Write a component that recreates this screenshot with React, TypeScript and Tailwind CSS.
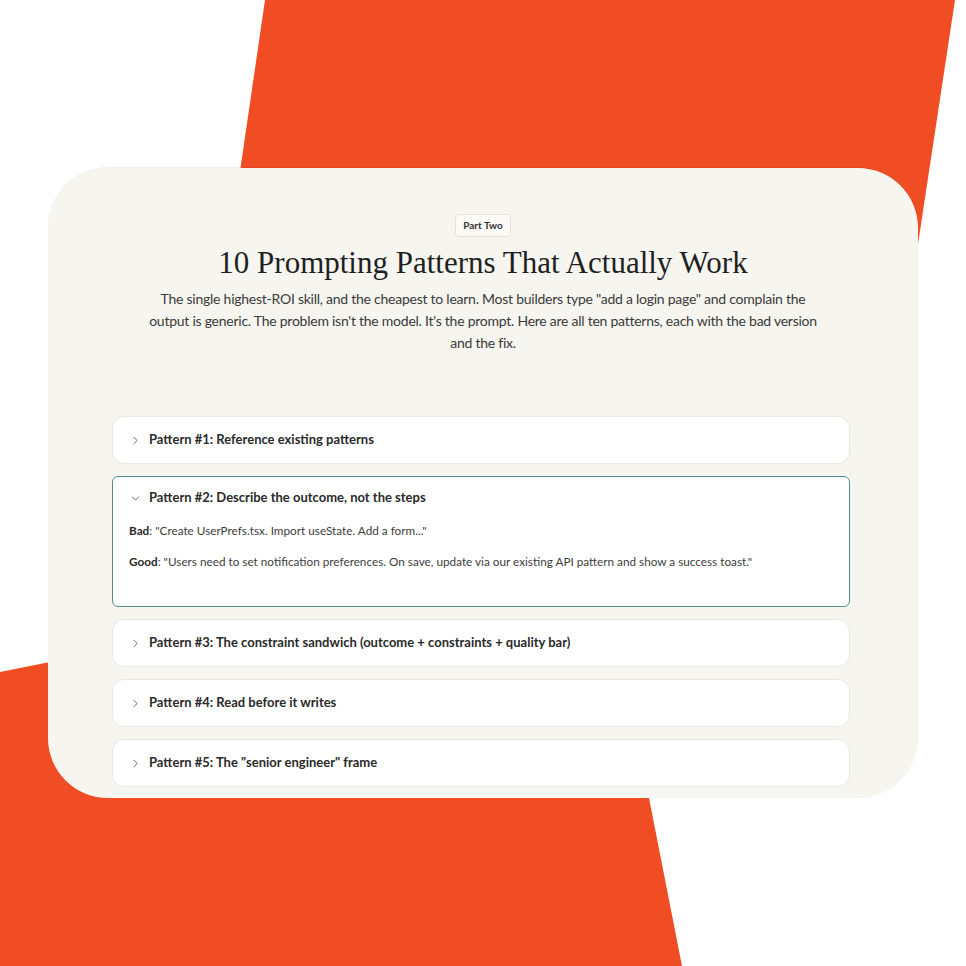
import { ChevronDown, ChevronRight } from "lucide-react";

interface Pattern {
  id: number;
  title: string;
  bad?: string;
  good?: string;
}

const PATTERNS: Pattern[] = [
  { id: 1, title: "Reference existing patterns" },
  {
    id: 2,
    title: "Describe the outcome, not the steps",
    bad: "\"Create UserPrefs.tsx. Import useState. Add a form...\"",
    good: "\"Users need to set notification preferences. On save, update via our existing API pattern and show a success toast.\"",
  },
  { id: 3, title: "The constraint sandwich (outcome + constraints + quality bar)" },
  { id: 4, title: "Read before it writes" },
  { id: 5, title: "The \"senior engineer\" frame" },
];

const sans = { fontFamily: "Lato, 'Open Sans', sans-serif" };

const PatternItem = ({ pattern }: { pattern: Pattern }) => {
  const open = !!pattern.bad;

  if (!open) {
    return (
      <div className="rounded-[12px] border border-[#e9e7e1] bg-white">
        <div className="flex h-[46px] items-center gap-[7px] pl-[16px]">
          <ChevronRight size={13} strokeWidth={1.6} className="text-[#555]" />
          <span className="text-[13px] font-bold text-[#2a2a2a]">Pattern #{pattern.id}: {pattern.title}</span>
        </div>
      </div>
    );
  }

  return (
    <div className="rounded-[6px] border border-[#4f8e8f] bg-white pb-[36px]">
      <div className="flex h-[42px] items-center gap-[7px] pl-[16px]">
        <ChevronDown size={13} strokeWidth={1.6} className="text-[#555]" />
        <span className="text-[13px] font-bold text-[#2a2a2a]">Pattern #{pattern.id}: {pattern.title}</span>
      </div>
      <div className="pl-[16px] pt-[4px] text-[11.75px] leading-[16px] text-[#3d3d3d]">
        <p className="mb-[15px]">
          <span className="font-bold text-[#2a2a2a]">Bad</span>: {pattern.bad}
        </p>
        <p>
          <span className="font-bold text-[#2a2a2a]">Good</span>: {pattern.good}
        </p>
      </div>
    </div>
  );
};

export default function App() {
  return (
    <div className="relative h-[966px] w-[966px] overflow-hidden bg-white" style={sans}>
      {/* orange backdrop shape */}
      <svg className="absolute inset-0" width="966" height="966" viewBox="0 0 966 966">
        <polygon
          points="265,0 955,0 905,330 618,640 682,966 0,966 0,672 120,648 230,240"
          fill="#f14d24"
        />
      </svg>

      <div className="relative pl-[48px] pt-[168px]">
        <div className="h-[630px] w-[870px] overflow-hidden rounded-[60px] bg-[#f7f5ef] shadow-[0_-1px_0_rgba(0,0,0,0.06)]">
          <div className="flex flex-col items-center pt-[46px]">
            <span className="flex h-[23px] items-center rounded-[4px] border border-[#e4e2db] bg-[#fbfaf7] px-[7px] text-[10px] font-bold text-[#333]">
              Part Two
            </span>
            <h1
              className="mt-[8px] text-[31px] leading-[36px] text-[#1f1f1f]"
              style={{ fontFamily: "'Liberation Serif', 'DejaVu Serif', serif" }}
            >
              10 Prompting Patterns That Actually Work
            </h1>
            <p className="mt-[7px] w-[720px] text-center text-[14px] leading-[22px] tracking-[-0.25px] text-[#3a3a3a]">
              The single highest-ROI skill, and the cheapest to learn. Most builders type "add a login page" and complain the
              <br />
              output is generic. The problem isn't the model. It's the prompt. Here are all ten patterns, each with the bad version
              <br />
              and the fix.
            </p>
          </div>

          <div className="ml-[64px] mt-[62px] flex w-[738px] flex-col gap-[12px]">
            {PATTERNS.map((p) => (
              <PatternItem key={p.id} pattern={p} />
            ))}
          </div>
        </div>
      </div>
    </div>
  );
}
